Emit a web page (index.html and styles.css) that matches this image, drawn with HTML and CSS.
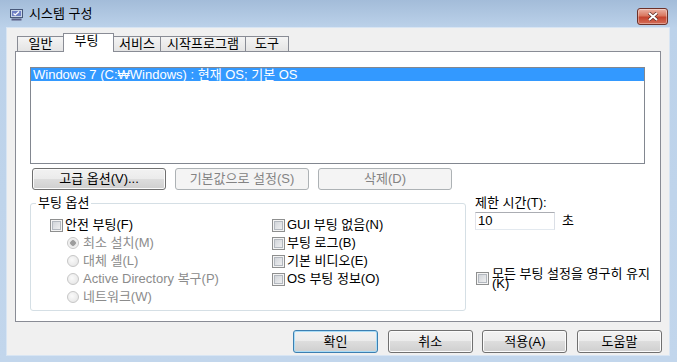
FILE: index.html
```html
<!DOCTYPE html>
<html lang="ko">
<head>
<meta charset="utf-8">
<title>시스템 구성</title>
<link rel="stylesheet" href="styles.css">
</head>
<body>
<div id="window">
  <div class="titlebar">
    <svg class="appicon" width="13" height="12" viewBox="0 0 13 12">
      <rect x="0.5" y="0.5" width="12" height="8" fill="#c9d6e8" stroke="#48597a"/>
      <rect x="2" y="2" width="9" height="5" fill="#6f7fc4"/>
      <path d="M3.5 4.5 L5.2 6 L9 2.6" stroke="#fff" stroke-width="1.3" fill="none"/>
      <rect x="1.5" y="9.5" width="10" height="2" fill="#5a5f86"/>
    </svg>
    <span class="title">시스템 구성</span>
    <div class="close">
      <svg width="12" height="9" viewBox="0 0 12 9">
        <path d="M2 1 L10 8 M10 1 L2 8" stroke="#5b2a24" stroke-width="3.4" fill="none"/>
        <path d="M2 1 L10 8 M10 1 L2 8" stroke="#fff" stroke-width="2" fill="none"/>
      </svg>
    </div>
  </div>

  <div class="client">
    <div class="tabs">
      <div class="tab t1">일반</div>
      <div class="tab sel">부팅</div>
      <div class="tab t3">서비스</div>
      <div class="tab t4">시작프로그램</div>
      <div class="tab t5">도구</div>
    </div>

    <div class="panel">
      <div class="listbox">
        <div class="item">Windows 7 (C:₩Windows) : 현재 OS; 기본 OS</div>
      </div>

      <div class="btnrow">
        <button class="btn wide">고급 옵션(V)...</button>
        <button class="btn wide" disabled>기본값으로 설정(S)</button>
        <button class="btn wide" disabled>삭제(D)</button>
      </div>

      <div class="options">
        <fieldset class="group">
          <legend>부팅 옵션</legend>
          <div class="cols">
            <div class="col col1">
              <div class="row"><span class="check"></span>안전 부팅(F)</div>
              <div class="row sub"><span class="radio on"></span>최소 설치(M)</div>
              <div class="row sub"><span class="radio"></span>대체 셸(L)</div>
              <div class="row sub"><span class="radio"></span>Active Directory 복구(P)</div>
              <div class="row sub"><span class="radio"></span>네트워크(W)</div>
            </div>
            <div class="col">
              <div class="row"><span class="check"></span>GUI 부팅 없음(N)</div>
              <div class="row"><span class="check"></span>부팅 로그(B)</div>
              <div class="row"><span class="check"></span>기본 비디오(E)</div>
              <div class="row"><span class="check"></span>OS 부팅 정보(O)</div>
            </div>
          </div>
        </fieldset>

        <div class="side">
          <div class="lbl">제한 시간(T):</div>
          <div class="timeout">
            <div class="input">10</div>
            <span class="unit">초</span>
          </div>
          <div class="row keep"><span class="check"></span><span class="txt">모든 부팅 설정을 영구히 유지 (K)</span></div>
        </div>
      </div>
    </div>

    <div class="footer">
      <button class="btn def">확인</button>
      <button class="btn">취소</button>
      <button class="btn">적용(A)</button>
      <button class="btn">도움말</button>
    </div>
  </div>
</div>
</body>
</html>
```

FILE: styles.css
```css
body { margin: 0; font: 13px/14px "Liberation Sans", "Noto Sans CJK KR", sans-serif; color: #000; }

#window { width: 677px; height: 362px; display: flex; flex-direction: column; overflow: hidden;
  background: linear-gradient(#a3bcd9, #bcd2ea 28px, #c2d6ec); }

/* title bar */
.titlebar { height: 28px; flex: none; display: flex; align-items: center; padding-left: 10px; }
.appicon { margin-top: 1px; }
.title { margin-left: 6px; }
.close { margin-left: auto; margin-right: 9px; align-self: flex-start; margin-top: 8px;
  width: 31px; height: 17px; box-sizing: border-box; border: 1px solid #6d3128; border-radius: 3px;
  background: linear-gradient(#ebb3a6, #d9775f 45%, #c5442f 55%, #d46e58);
  box-shadow: inset 0 0 0 1px rgba(255,255,255,.35);
  display: flex; align-items: center; justify-content: center; }

.client { flex: 1; margin: 0 8px 7px 7px; background: #f0f0f0; display: flex; flex-direction: column;
  box-shadow: 0 0 0 1px #d8e5f3; }

/* tabs */
.tabs { display: flex; align-items: flex-end; height: 18px; margin: 5px 0 0 10px; position: relative; z-index: 1; }
.tab { box-sizing: border-box; height: 15px; line-height: 14px; margin-left: -1px; text-align: center;
  border: 1px solid #898c95; border-bottom: none; background: linear-gradient(#f4f4f4, #e4e4e4); }
.tab.t1 { margin-left: 0; width: 47px; }
.tab.sel { width: 51px; height: 19px; margin-bottom: -1px; padding: 1px 4px 0 0; line-height: 12px;
  background: #fff; position: relative; z-index: 2; }
.tab.t3 { width: 48px; }
.tab.t4 { width: 86px; }
.tab.t5 { width: 44px; }

.panel { margin-left: 8px; width: 646px; height: 271px; box-sizing: border-box;
  border: 1px solid #898c95; background: #fff; }

.listbox { margin: 15px 0 0 14px; width: 615px; height: 97px; box-sizing: border-box; border: 1px solid #828790; }
.item { height: 13px; line-height: 13px; padding-left: 2px; background: #3399ff; color: #fff; white-space: nowrap; }

/* buttons */
.btn { box-sizing: border-box; height: 22px; padding: 0; font: inherit; line-height: 14px; color: #000;
  border: 1px solid #707070; border-radius: 3px;
  background: linear-gradient(#f2f2f2, #ebebeb 50%, #dddddd 50%, #cfcfcf);
  box-shadow: inset 0 0 0 1px #fbfbfb; }
.btn:disabled { color: #838383; border-color: #adb2b5; background: #f4f4f4; box-shadow: none; }
.btn.def { border-color: #3c7fb1; box-shadow: inset 0 0 0 1px #a9dcf6; }
.btnrow { display: flex; gap: 9px; margin: 4px 0 0 16px; }
.btn.wide { width: 134px; }

/* boot options */
.options { display: flex; margin: 7px 0 0 14px; }
.group { flex: none; margin: 0; padding: 7px 0 4px 0; width: 436px; box-sizing: border-box; min-width: 0;
  border: 1px solid #d5dfe5; border-radius: 3px; }
.group legend { padding: 0 2px; margin-left: 5px; line-height: 12px; }
.cols { display: flex; padding-left: 19px; }
.col1 { width: 222px; }
.row { display: flex; align-items: center; height: 18px; white-space: nowrap; }
.row.sub { padding-left: 17px; color: #8c8c8c; }

.check { flex: none; width: 13px; height: 13px; margin-right: 2px; box-sizing: border-box;
  border: 1px solid #8e8f8f; background: linear-gradient(135deg, #c9cdd3, #f6f6f6);
  box-shadow: inset 0 0 0 1px #f4f4f4, inset 0 0 0 2px #b3b8bf; }
.radio { flex: none; width: 12px; height: 12px; margin-right: 4px; box-sizing: border-box; border-radius: 50%;
  border: 1px solid #c6c6c6; background: radial-gradient(circle at 40% 40%, #fafafa, #e2e2e2); }
.radio.on { background: radial-gradient(circle, #9d9d9d 0 2.5px, #e6e6e6 3px, #f6f6f6 5px); }

.side { flex: none; margin-left: 9px; display: flex; flex-direction: column; }
.lbl { line-height: 12px; }
.timeout { display: flex; align-items: center; margin-top: 3px; }
.input { width: 80px; height: 18px; box-sizing: border-box; padding-left: 2px; line-height: 16px; background: #fff;
  border: 1px solid; border-color: #abadb3 #dbdfe6 #e3e9ef #e2e3ea; }
.unit { margin-left: 7px; }
.row.keep { height: auto; align-items: flex-start; margin-top: 39px; }
.keep .check { margin: 3px 3px 0 1px; }
.keep .txt { flex: none; width: 166px; white-space: normal; line-height: 10px; }

/* bottom buttons */
.footer { display: flex; justify-content: flex-end; gap: 9.67px; margin-top: 8px; padding-right: 7px; }
.footer .btn { width: 85px; height: 23px; }
```
